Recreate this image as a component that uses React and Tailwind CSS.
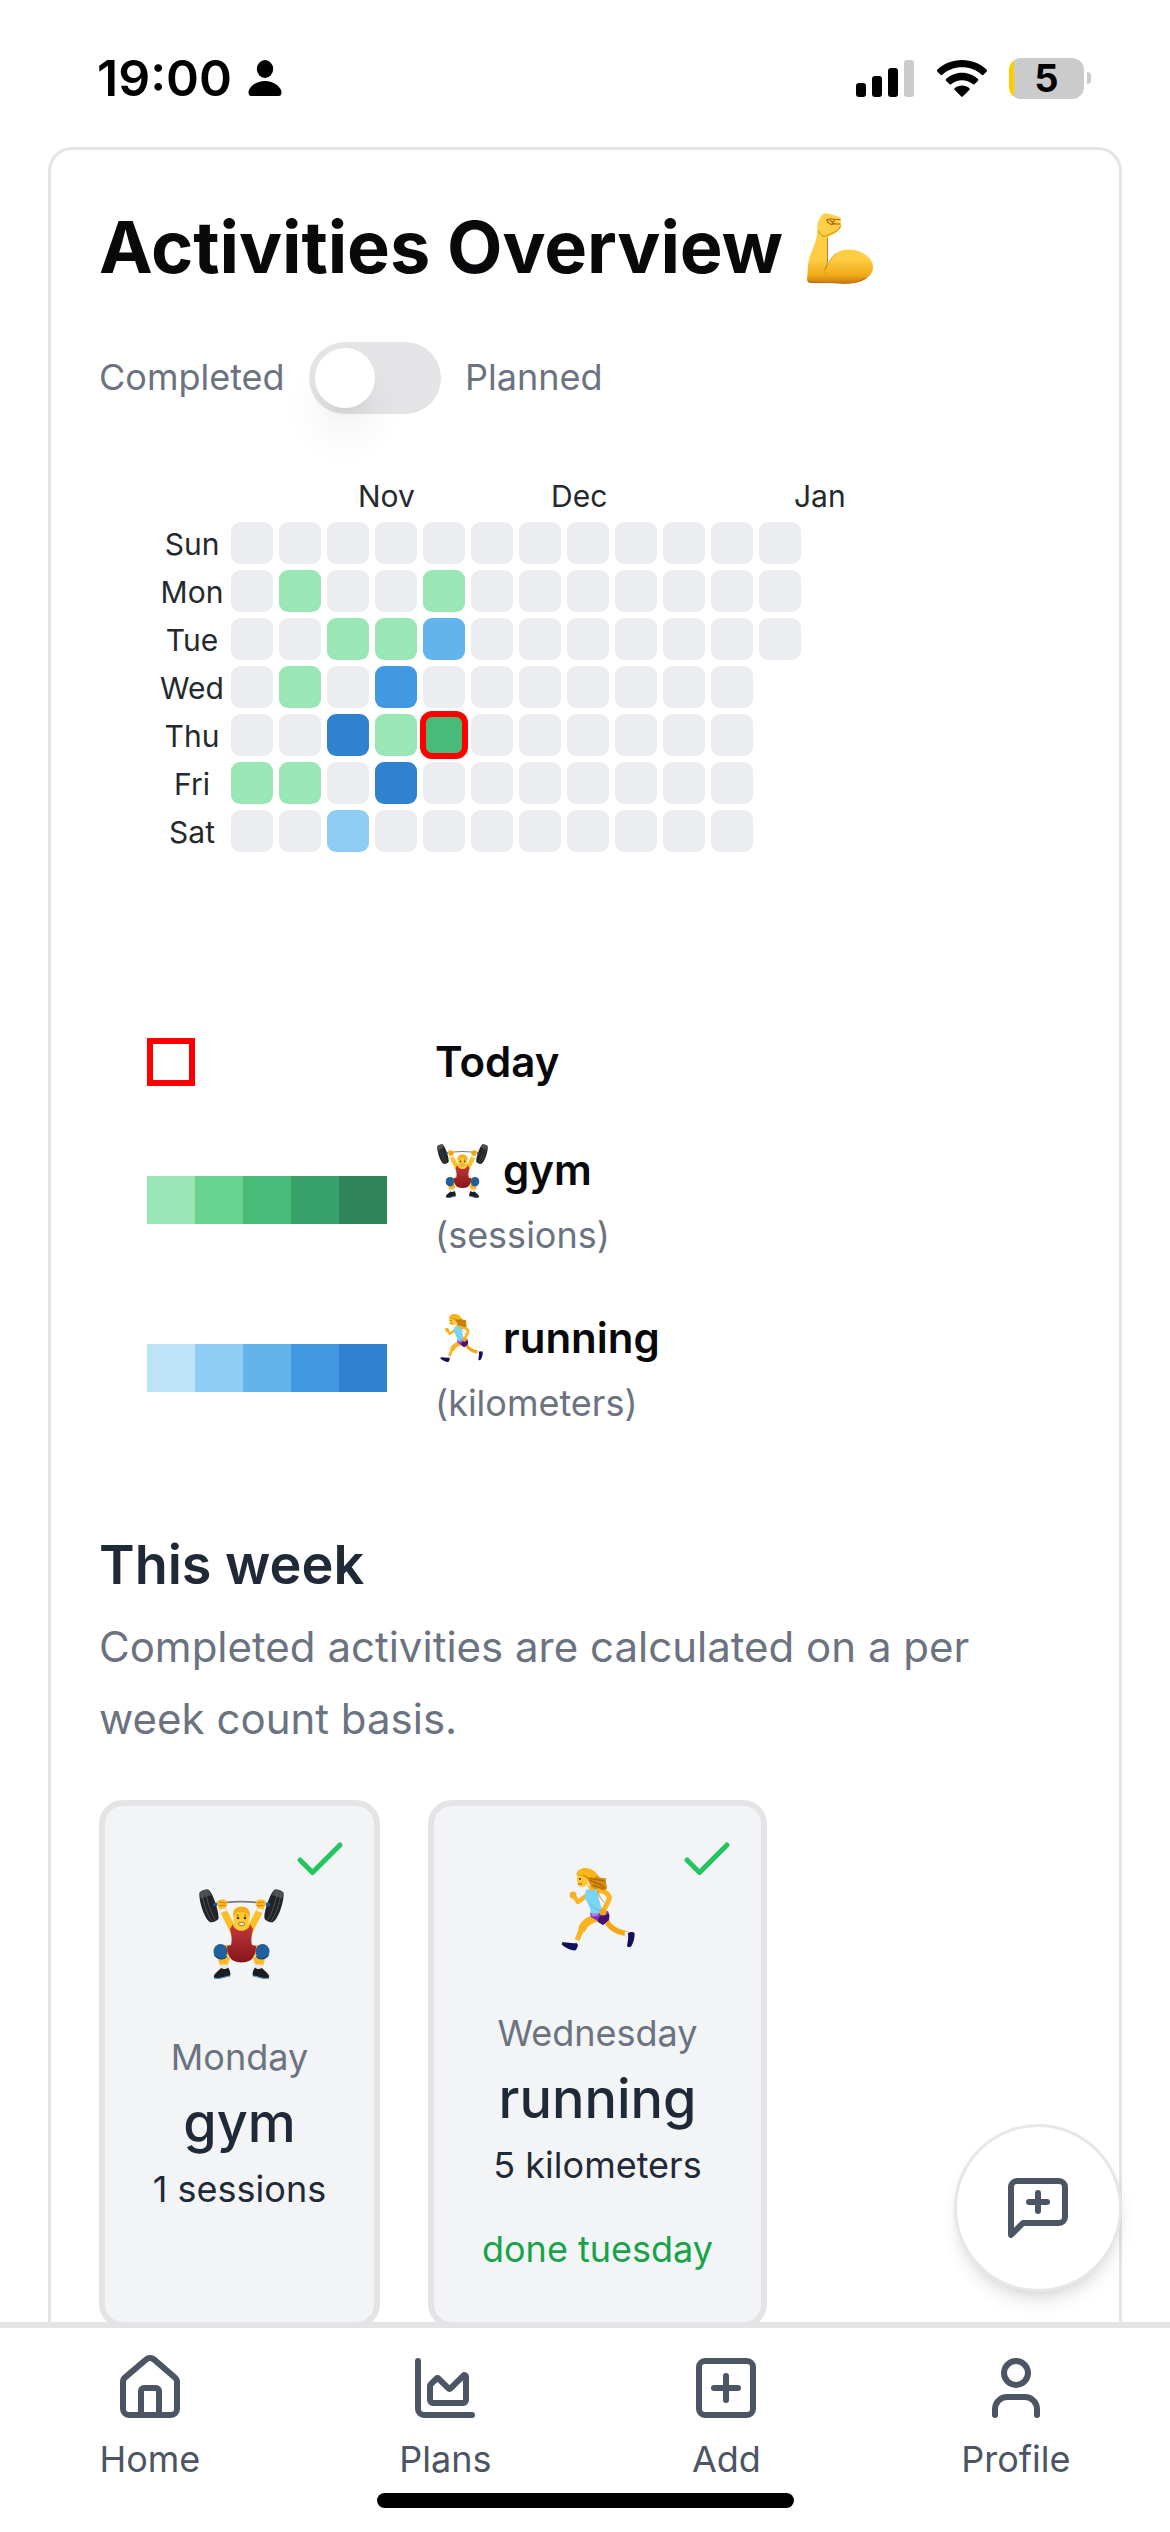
import React from "react";
import { Check, House, ChartArea, SquarePlus, User } from "lucide-react";

const DAYS = ["Sun", "Mon", "Tue", "Wed", "Thu", "Fri", "Sat"];

const CELLS = {
  "1-1": "bg-[#9ae6b4]",
  "4-1": "bg-[#9ae6b4]",
  "2-2": "bg-[#9ae6b4]",
  "3-2": "bg-[#9ae6b4]",
  "4-2": "bg-[#63b3ed]",
  "1-3": "bg-[#9ae6b4]",
  "3-3": "bg-[#4299e1]",
  "2-4": "bg-[#3182ce]",
  "3-4": "bg-[#9ae6b4]",
  "4-4": "bg-[#48bb78] ring-3 ring-[#ff0000] border-3 border-[#ff0000]",
  "0-5": "bg-[#9ae6b4]",
  "1-5": "bg-[#9ae6b4]",
  "3-5": "bg-[#3182ce]",
  "2-6": "bg-[#90cdf4]",
};

const GREENS = ["bg-[#9ae6b4]", "bg-[#68d391]", "bg-[#48bb78]", "bg-[#38a169]", "bg-[#2f855a]"];
const BLUES = ["bg-[#bee3f8]", "bg-[#90cdf4]", "bg-[#63b3ed]", "bg-[#4299e1]", "bg-[#3182ce]"];

function FlexedArm({ className }) {
  return (
    <svg className={className} viewBox="0 0 66 71" fill="none">
      <defs>
        <linearGradient id="arm" x1="0" y1="0" x2="0" y2="1">
          <stop offset="0" stopColor="#ffd047" />
          <stop offset="0.65" stopColor="#ffcd43" />
          <stop offset="0.88" stopColor="#f0ab19" />
          <stop offset="1" stopColor="#c8780c" />
        </linearGradient>
      </defs>
      <path
        d="M15.500 1.500C17 0 20 0 23 1C27 2.500 34 3.500 34 6C34 8 33 9.500 34 11C35 14 33 16 31 18C28 21 24 22 20.500 24.500V47C20.500 50 19.500 53 19 54.500C22 50 24 44.500 29 40.500C33 37 38 36.300 43 36.500C55 37 66 45 66 54C66 61 61 66 52 68.500C43 71 34 70.500 28 70C20 69.500 12 70 4 70C1 70 0 68.500 0 66C1 58 0.500 50 3 43C5.500 36 9 29 10 22C10.500 17 10 13 11 9.500C11.800 6 14 4 15.500 1.500Z"
        fill="url(#arm)"
      />
      <path d="M20.500 24.500V47C20.500 50 19.500 53 19 54.500L17.500 57" stroke="#b9720b" strokeWidth="0.900" />
      <path d="M19 54.500C22 50 24 44.500 29 40.500" stroke="#c98816" strokeWidth="0.800" />
      <path d="M11.500 18C14 24 18 24 21 22C25 20 31 19 33.500 13" stroke="#d08a13" strokeWidth="1" />
      <path d="M20 6.500C24 5 28 7 33 6.500M20 7C21 11 24 12 27 11L33 11M23 7.500L28 10.500M27.500 7.500L25 11" stroke="#a85f09" strokeWidth="1.100" strokeLinecap="round" />
      <path d="M1 68.500C8 70.500 20 69 30 70C42 71 52 70 59 65" stroke="#b5660c" strokeWidth="0.900" />
      <path d="M17 58C19 60 20 62 19 65" stroke="#e2a11f" strokeWidth="1" />
    </svg>
  );
}

function Plates() {
  return (
    <g>
      <path d="M0.500 4C1 2 7.500 0 9.500 0.800C14 4 20.500 24 19.500 29.500C18.500 32 13 34 11 33C6 31 -0.500 12 0.500 4Z" fill="#222326" />
      <path d="M3 3.500C4 14 8.500 26 13 32.500M6.500 2C8 12 12 25 16.500 31.500" stroke="#55575b" strokeWidth="0.900" fill="none" />
      <path d="M0.600 4C1 2 7.500 0 9.500 0.800C10.500 2 11.200 4 12 6L1.500 9.500Z" fill="#5c5e62" opacity="0.700" />
      <path d="M14 16L18 15" stroke="#15549b" strokeWidth="3" />
    </g>
  );
}

function HalfLifter() {
  return (
    <g>
      <path d="M23.500 20L33.500 40" stroke="#fdbf24" strokeWidth="7" strokeLinecap="round" />
      <path d="M20.500 22.500L27 20" stroke="#eceef1" strokeWidth="3.500" />
      <path d="M18 13C19 10 26 9.500 28 12.500C29 16 27 20 23.500 19.500C20 19.500 17.500 17 18 13Z" fill="#fcb81f" />
      <path d="M20 13L27 14M20.500 16.500L27 16.500" stroke="#c97f0d" strokeWidth="0.900" />
      <path d="M34 62L25 61" stroke="#f9b11c" strokeWidth="10" strokeLinecap="round" />
      <path d="M18.500 68H31L28.500 77H21Z" fill="#fdb91f" />
      <path d="M21.500 75.500H29L28 80H22Z" fill="#e6e9ee" />
      <ellipse cx="21.500" cy="62.500" rx="7" ry="7.500" fill="#215f9d" />
      <path d="M15.500 66C20 71 25 71 28 67" stroke="#174b80" strokeWidth="1.300" fill="none" />
      <path d="M14.800 88C15 84 20 82 22 79C25 81 27 80 29 78.500C31 81 32 85 31 87C27 87 23 90 19 89.800C17 90 15 89.500 14.800 88Z" fill="#1d1d20" />
      <path d="M15 89C19 91 24 88 31 87" stroke="#4a9ade" strokeWidth="1.200" fill="none" />
    </g>
  );
}

function Lifter({ className }) {
  return (
    <svg className={className} viewBox="0 0 85 90">
      <defs>
        <linearGradient id="suit" x1="0" y1="0" x2="0" y2="1">
          <stop offset="0" stopColor="#c23a3f" />
          <stop offset="0.500" stopColor="#a5262b" />
          <stop offset="1" stopColor="#86151b" />
        </linearGradient>
      </defs>
      <path d="M14 16C30 11.500 55 11.500 71 16" stroke="#77797c" strokeWidth="1.800" fill="none" />
      <Plates />
      <g transform="translate(85 0) scale(-1 1)">
        <Plates />
      </g>
      <HalfLifter />
      <g transform="translate(85 0) scale(-1 1)">
        <HalfLifter />
      </g>
      <path d="M34 35L38 37H47L51 35L55 41L52 49H33L30 41Z" fill="#fdbb22" />
      <path d="M34 35C34.500 44 50.500 44 51 35L54 40C52 47 52 52 53 56L57 57C57 63 55 69 51 71.500C46 74 39 74 34 71.500C30 69 28 63 28 57L32 56C33 52 33 47 31 40Z" fill="url(#suit)" />
      <path d="M34.500 25C34 17 51 17 50.500 25V32C50.500 38 46.500 41.500 42.500 41.500C38.500 41.500 34.500 38 34.500 32Z" fill="#fecb35" />
      <path d="M34.300 28C33 21 37 17.500 42.500 17.500C48 17.500 52 21 50.700 28C49 23 44 23.500 39 23C36.500 23 35.500 26 34.300 28Z" fill="#f5ab14" />
      <circle cx="39" cy="29" r="1.300" fill="#59320c" />
      <circle cx="46" cy="29" r="1.300" fill="#59320c" />
      <path d="M37.500 26.500L40 25.800M45 25.800L47.500 26.500" stroke="#a66208" strokeWidth="1" />
      <ellipse cx="42.500" cy="35" rx="3.200" ry="1.700" fill="#e9e5dc" stroke="#9b5c12" strokeWidth="0.800" />
    </svg>
  );
}

function Runner({ className }) {
  return (
    <svg className={className} viewBox="0 0 74 84" fill="none" strokeLinecap="round" strokeLinejoin="round">
      <path d="M44 51C49 60 54 63 65 65.500" stroke="#f3a616" strokeWidth="5.500" />
      <path d="M64 63L68 64.500L66.500 70L63.500 68Z" fill="#e9e9f2" />
      <path d="M67 65C69 64 72 63.500 73.500 65C74 70 72 76 70 78.500C68.500 80 66 79 66 77.500C67 73 67.500 69 67 65Z" fill="#12115a" />
      <path d="M35 50C28 52 23 56 21.500 60" stroke="#fbb320" strokeWidth="8" />
      <path d="M21 60L16.500 71" stroke="#fbb320" strokeWidth="5" />
      <path d="M14 71L19 73L18 77L13.500 75Z" fill="#ececf4" />
      <path d="M1 74.500C5 73.500 10 76 15.500 75L17 77C16.500 79.500 15.500 82 14 82.500C10 82.500 3 79 0.800 76.500Z" fill="#12115a" />
      <path d="M29 45L47 43C49 47 49 50 47.500 52L42 57L36.500 53L30 49Z" fill="#7e35b4" />
      <path d="M37 51L40 47L48 46V52L42 57L37 54Z" fill="#461272" />
      <path d="M30 45L38 44L37 48L31 48.500Z" fill="#b275ea" />
      <path d="M12 27L17 34L25 28" stroke="#fbb422" strokeWidth="4.400" />
      <circle cx="12" cy="27" r="3.400" fill="#f5ae22" />
      <path d="M26 17L36 20L40 24L32 28Z" fill="#fbb826" />
      <path d="M26 21C29 22 32 24 34.500 20.500L37 21C37 27 38 34 42 43C39 46 33 46 29.500 45C30 40 27 36 24.500 31.500C23 27 24 24 26 21Z" fill="#79d5f2" />
      <path d="M30 37C33 41 37 42 41 43" stroke="#55bce0" strokeWidth="1" />
      <path d="M38 22.500C44 23 47 26 48.500 29C48 34 44 38 42 44" stroke="#fbb422" strokeWidth="4.800" />
      <path d="M37 24C38 28 40 31 43 34" stroke="#d38b12" strokeWidth="0.900" />
      <circle cx="42" cy="44" r="3.600" fill="#f3a61a" />
      <path d="M16.500 7C15.500 11 16 14 17 17C19 20 24 19.500 27 16L28 6Z" fill="#ffc83a" />
      <path d="M15.500 7C16 2 21 -0.200 26 0.400C32 1 35.500 5 38 9C41 11 44 9.500 45 10.500C44 12 45.500 16 46 20C44 24 41 22 38 20.500C33 22 29 19 28 14C27 11 25 8 15.500 7Z" fill="#d98b08" />
      <path d="M15.500 7C16 2 21 -0.200 26 0.400C32 1 35 4.500 36.500 8C31 11 27 10 24.500 7.500C21 7 18 7.500 15.500 7Z" fill="#f9b619" />
      <path d="M29 12C33 15 38 14 44 20M29 10C34 12 40 12 44 13M32 17C35 19 39 19 42 21" stroke="#a66306" strokeWidth="1.100" />
      <circle cx="19" cy="11" r="1" fill="#5a3209" />
      <path d="M17.500 16L20.500 16" stroke="#b8412a" strokeWidth="1" />
    </svg>
  );
}

function StatusBar() {
  return (
    <header className="flex h-[147px] shrink-0 items-start justify-between pl-[97px] pr-[79px] pt-[54px] text-black">
      <div className="flex h-12 items-center">
        <span className="w-[135px] whitespace-nowrap text-[50px] font-semibold leading-[48px]">19:00</span>
        <svg className="ml-4 h-9 w-[34px]" viewBox="0 0 34 36">
          <ellipse cx="17" cy="9" rx="8.200" ry="9" />
          <path d="M17 21C27 21 33.500 28 33.500 32.500C33.500 35 32.500 36 30.500 36H3.500C1.500 36 .5 35 .5 32.500C.5 28 7 21 17 21Z" />
        </svg>
      </div>
      <div className="flex h-12 items-center">
        <div className="flex h-[37px] items-end gap-1.5">
          <i className="h-3.5 w-2.5 rounded-[3px] bg-black" />
          <i className="h-[21px] w-2.5 rounded-[3px] bg-black" />
          <i className="h-[29px] w-2.5 rounded-[3px] bg-black" />
          <i className="h-[37px] w-2.5 rounded-[3px] bg-[#cbcbcb]" />
        </div>
        <svg className="ml-[23px] h-[37px] w-[50px]" viewBox="0 0 50 37">
          <path d="M25 0C34.500 0 43 3.500 49.500 9.500C50.200 10.200 50.200 11 49.500 11.700L46.700 14.600C46 15.300 45.300 15.300 44.600 14.700C39.500 9.800 32.500 7.200 25 7.200C17.500 7.200 10.500 9.800 5.400 14.700C4.700 15.300 4 15.300 3.300 14.600L.5 11.700C-.2 11-.2 10.200.5 9.500C7 3.500 15.500 0 25 0Z" />
          <path d="M25 12.700C31.200 12.700 36.700 15 40.800 18.800C41.500 19.500 41.500 20.200 40.800 20.900L37.700 24C37 24.700 36.300 24.600 35.600 24.100C32.700 21.600 29 20.200 25 20.200C21 20.200 17.300 21.600 14.400 24.100C13.700 24.600 13 24.700 12.300 24L9.200 20.900C8.500 20.200 8.500 19.500 9.200 18.800C13.300 15 18.800 12.700 25 12.700Z" />
          <path d="M25 25.400C27.800 25.400 30.300 26.400 32.200 28C32.900 28.700 32.900 29.300 32.200 30L26 36.300C25.300 37 24.700 37 24 36.300L17.800 30C17.100 29.300 17.100 28.700 17.800 28C19.700 26.400 22.200 25.400 25 25.400Z" />
        </svg>
        <div className="ml-[22px] flex h-[41px] w-[75px] items-center justify-center rounded-[12px] bg-linear-to-r from-[#ffcc00] from-[5px] to-[#cbcbcb] to-[5px]">
          <b className="text-[38px] font-bold leading-[48px]">5</b>
        </div>
        <i className="ml-[3px] h-3 w-1 rounded-r-full bg-[#cbcbcb]" />
      </div>
    </header>
  );
}

function Calendar() {
  return (
    <section className="mt-[60px] pl-[54px] text-[30px] text-[#24292e]">
      <div className="mb-1 flex h-11 pl-[205px] leading-[44px]">
        <span className="w-[193px]">Nov</span>
        <span className="w-[243px]">Dec</span>
        <span>Jan</span>
      </div>
      <div className="flex flex-col gap-1.5">
        {DAYS.map((day, row) => (
          <div key={day} className="flex h-[42px] gap-1.5">
            <span className="w-[72px] pl-1.5 pt-px text-center leading-[42px]">
              <span className="-mx-2">{day}</span>
            </span>
            {Array.from({ length: row < 3 ? 12 : 11 }, (_, col) => (
              <i key={col} className={`size-[42px] rounded-[9px] ${CELLS[`${col}-${row}`] || "bg-[#ebedf0]"}`} />
            ))}
          </div>
        ))}
      </div>
    </section>
  );
}

function LegendRow({ colors, icon, name, unit }) {
  return (
    <div className="flex items-center">
      <div className="flex w-72">
        {colors.map((c) => (
          <i key={c} className={`size-12 ${c}`} />
        ))}
      </div>
      <div>
        <div className="flex h-[72px] items-center text-[42px] font-semibold">
          <span className="flex w-[68px]">{icon}</span>
          <span className="pb-0.5">{name}</span>
        </div>
        <div className="h-[60px] text-4xl leading-[58px] text-[#6b7280]">{unit}</div>
      </div>
    </div>
  );
}

function ActivityCard({ className, icon, day, name, amount, note }) {
  return (
    <article className={`relative flex h-[528px] flex-col items-center rounded-3xl border-6 border-[#e4e4e7] bg-[#f3f4f6] text-4xl text-[#1f2937] ${className}`}>
      <Check className="absolute right-6 top-6 size-[60px] text-[#22c55e]" />
      {icon}
      <span className="leading-[48px] text-[#6b7280]">{day}</span>
      <span className="text-[54px] font-medium leading-[84px]">{name}</span>
      <span className="leading-[48px]">{amount}</span>
      {note && <span className="mt-9 leading-[48px] text-[#16a34a]">{note}</span>}
    </article>
  );
}

function NavItem({ Icon, label }) {
  return (
    <a className="flex flex-col items-center">
      <Icon className="size-[72px]" />
      <span className="mt-[11px] text-4xl leading-[48px]">{label}</span>
    </a>
  );
}

export default function App() {
  return (
    <div className="relative flex h-[2532px] w-[1170px] flex-col overflow-hidden bg-white font-['Inter',sans-serif]">
      <StatusBar />
      <main className="mx-12 h-[2175px] shrink-0 overflow-hidden rounded-t-3xl border-3 border-b-0 border-[#e4e4e9] px-12 pt-12">
        <h1 className="flex h-24 items-center text-7xl font-bold leading-[96px] tracking-[-0.1px] text-[#09090b]">
          <span className="whitespace-nowrap pt-0.5">Activities Overview</span>
          <FlexedArm className="ml-6 mt-1 h-[71px] w-[66px]" />
        </h1>
        <div className="mt-12 flex h-[72px] items-center text-4xl text-[#6b7280]">
          <span className="w-[210px] pb-0.5 leading-[48px]">Completed</span>
          <span className="flex h-[72px] w-[132px] rounded-full bg-[#e4e4e7] p-1.5">
            <span className="size-[60px] rounded-full bg-white shadow-[0_30px_45px_-9px_rgba(0,0,0,0.1),0_12px_18px_-12px_rgba(0,0,0,0.1)]" />
          </span>
          <span className="ml-6 pb-0.5 leading-[48px]">Planned</span>
        </div>
        <Calendar />
        <section className="mt-[174px] flex flex-col gap-9 pl-12 text-[#09090b]">
          <div className="flex h-[72px] items-center">
            <div className="w-72">
              <i className="block size-12 border-6 border-[#ff0000]" />
            </div>
            <span className="pb-0.5 text-[42px] font-semibold">Today</span>
          </div>
          <LegendRow colors={GREENS} icon={<Lifter className="ml-0.5 mt-0.5 h-[54px] w-[51px]" />} name="gym" unit="(sessions)" />
          <LegendRow colors={BLUES} icon={<Runner className="ml-[5px] h-[49px] w-[43px]" />} name="running" unit="(kilometers)" />
        </section>
        <h2 className="mt-[89px] text-[54px] font-semibold leading-[84px] text-[#1f2937]">This week</h2>
        <p className="mt-1 w-[930px] text-[42px] leading-[72px] text-[#6b7280]">
          Completed activities are calculated on a per week count basis.
        </p>
        <div className="mt-[45px] flex gap-12">
          <ActivityCard
            className="w-[281px]"
            icon={<Lifter className="mb-[54px] ml-1 mt-[83px] h-[90px] w-[85px]" />}
            day="Monday"
            name="gym"
            amount="1 sessions"
          />
          <ActivityCard
            className="w-[339px]"
            icon={<Runner className="mb-[57px] mt-[62px] h-[84px] w-[74px]" />}
            day="Wednesday"
            name="running"
            amount="5 kilometers"
            note="done tuesday"
          />
        </div>
      </main>
      <button className="absolute bottom-60 right-12 flex size-[168px] items-center justify-center rounded-full border-3 border-[#e5e7eb] bg-white text-[#4b5563] shadow-[0_12px_18px_-3px_rgba(0,0,0,0.1),0_6px_12px_-6px_rgba(0,0,0,0.1)]">
        <svg className="size-[72px]" viewBox="0 0 24 24" fill="none" stroke="currentColor" strokeWidth="2" strokeLinecap="round" strokeLinejoin="round">
          <path d="M21 15a2 2 0 0 1-2 2H7l-4 4V5a2 2 0 0 1 2-2h14a2 2 0 0 1 2 2z" />
          <path d="M12 7v6M9 10h6" />
        </svg>
      </button>
      <nav className="relative flex h-[210px] shrink-0 justify-around border-t-6 border-[#e4e4e7] bg-white pt-6 text-[#4b5563]">
        <NavItem Icon={House} label="Home" />
        <NavItem Icon={ChartArea} label="Plans" />
        <NavItem Icon={SquarePlus} label="Add" />
        <NavItem Icon={User} label="Profile" />
        <i className="absolute bottom-6 left-[377px] h-[15px] w-[417px] rounded-full bg-black" />
      </nav>
    </div>
  );
}
